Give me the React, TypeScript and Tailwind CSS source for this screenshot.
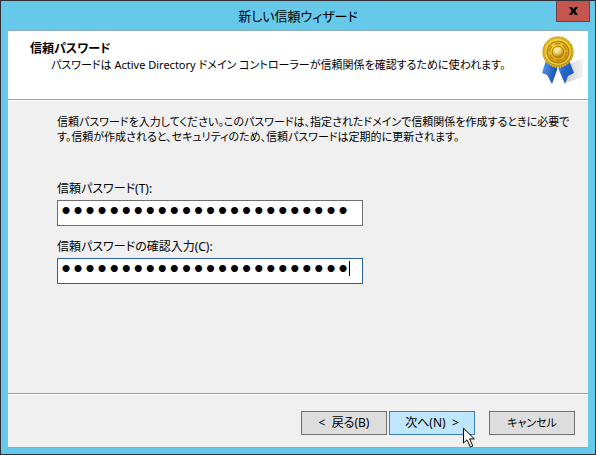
import React, { useState } from "react";

const uiButton =
  "h-6 w-[86px] border leading-4 text-black whitespace-pre text-center";

function MedalIcon() {
  const teeth = Array.from({ length: 36 }, (_, i) => i * 10);

  return (
    <svg width="44" height="52" viewBox="0 0 44 52" aria-hidden="true">
      <defs>
        <radialGradient id="gold" cx="0.4" cy="0.3" r="0.75">
          <stop offset="0" stopColor="#f5d642" />
          <stop offset="0.6" stopColor="#dcab18" />
          <stop offset="1" stopColor="#b07a08" />
        </radialGradient>
        <radialGradient id="boss" cx="0.4" cy="0.3" r="0.7">
          <stop offset="0" stopColor="#fffbd8" />
          <stop offset="0.5" stopColor="#edcb55" />
          <stop offset="1" stopColor="#a87308" />
        </radialGradient>
        <linearGradient id="ribbonLeft" x1="0" y1="0" x2="1" y2="0.3">
          <stop offset="0" stopColor="#5f9be4" />
          <stop offset="0.45" stopColor="#3a7cd6" />
          <stop offset="1" stopColor="#1a55ae" />
        </linearGradient>
        <linearGradient id="ribbonRight" x1="0" y1="0" x2="1" y2="0.4">
          <stop offset="0" stopColor="#6ba4ea" />
          <stop offset="0.4" stopColor="#2469cc" />
          <stop offset="1" stopColor="#1c5ab8" />
        </linearGradient>
        <linearGradient id="shade" x1="0" y1="0" x2="1" y2="0">
          <stop offset="0" stopColor="#cccccc" />
          <stop offset="1" stopColor="#f4f4f4" />
        </linearGradient>
      </defs>
      <path d="M25 49 L30 30 L43 24 V43 Z" fill="url(#shade)" />
      <path d="M6 26 L2 39 L7 41 L12 50 L17 36 L17 30 Z" fill="url(#ribbonLeft)" />
      <path d="M18 34 L25 50 L28 42 L34 39 L29 26 Z" fill="url(#ribbonRight)" />
      <circle cx="18" cy="18" r="15" fill="url(#gold)" stroke="#b8860c" />
      {teeth.map((angle) => (
        <path
          key={angle}
          d="M18 2.2 V4.4"
          stroke="#e0bb30"
          strokeWidth="1.4"
          transform={`rotate(${angle} 18 18)`}
        />
      ))}
      <circle cx="18" cy="18" r="12.2" fill="none" stroke="#f5da56" strokeWidth="1.2" />
      <circle cx="18" cy="18" r="10.8" fill="none" stroke="#b07d0c" strokeWidth="1.1" />
      <circle cx="18" cy="18" r="8.5" fill="none" stroke="#c08a0d" strokeWidth="1.4" strokeDasharray="6 3" />
      <circle cx="18" cy="18" r="5.8" fill="url(#boss)" stroke="#b27f0c" />
    </svg>
  );
}

function Pointer() {
  return (
    <svg
      width="13"
      height="21"
      viewBox="0 0 13 21"
      className="pointer-events-none absolute left-[74px] top-4 z-10"
      aria-hidden="true"
    >
      <path
        d="M0.5 1.2 V16 L4 12.8 L7.4 20 L9.8 19 L6.6 11.9 H11.3 Z"
        fill="#fff"
        stroke="#000"
      />
    </svg>
  );
}

type PasswordFieldProps = {
  id: string;
  label: string;
  focused?: boolean;
  value: string;
  onChange: (value: string) => void;
};

function PasswordField({ id, label, focused, value, onChange }: PasswordFieldProps) {
  return (
    <div>
      <label htmlFor={id} className="block text-xs leading-4">
        {label}
      </label>
      <div className="relative mt-[3px] w-full max-w-[306px]">
        <input
          id={id}
          type="password"
          value={value}
          onChange={(e) => onChange(e.target.value)}
          className={`block h-[26px] w-full border bg-white px-0.5 pb-1 font-['DejaVu_Sans_Mono',monospace] text-xl font-bold leading-5 text-black outline-0 ${
            focused ? "border-[#2a6496]" : "border-[#707070]"
          }`}
        />
        {focused && (
          <span className="pointer-events-none absolute left-[292px] top-[3px] h-[15px] w-px bg-black" />
        )}
      </div>
    </div>
  );
}

function App() {
  const [password, setPassword] = useState("x".repeat(24));
  const [confirm, setConfirm] = useState("x".repeat(24));

  return (
    <div className="flex min-h-screen flex-col border border-[#2f3036] bg-[#67c9ea] font-['Noto_Sans','Noto_Sans_CJK_JP',sans-serif] text-black [font-feature-settings:'palt']">
      <header className="grid h-[29px] grid-cols-[1fr_auto_1fr] items-start">
        <h1 className="col-start-2 pt-[3px] text-[13px] leading-6">新しい信頼ウィザード</h1>
        <button
          type="button"
          aria-label="閉じる"
          className="mr-[5px] flex h-[21px] w-[34px] items-center justify-center justify-self-end border border-t-0 border-[#70413f] bg-[#c4564f]"
        >
          <svg width="9" height="8" viewBox="0 0 9 8" aria-hidden="true">
            <path d="M0 0 H3 L4.5 2.4 L6 0 H9 L6.2 4 L9 8 H6 L4.5 5.6 L3 8 H0 L2.8 4 Z" fill="#000" />
          </svg>
        </button>
      </header>

      <main className="mx-[7px] mb-1.5 flex flex-1 flex-col border-y border-[#86aebd] bg-[#f0f0f0]">
        <section className="flex h-[69px] items-start justify-between border-b border-[#a0a0a0] bg-white pl-[22px] pr-1">
          <div className="pt-2.5">
            <h2 className="text-xs font-bold leading-4">信頼パスワード</h2>
            <p className="pl-[21px] text-[11px] leading-[15px]">
              パスワードは Active Directory ドメイン コントローラーが信頼関係を確認するために使われます。
            </p>
          </div>
          <div className="shrink-0 pt-[3px]">
            <MedalIcon />
          </div>
        </section>

        <form
          id="trust-form"
          onSubmit={(e) => e.preventDefault()}
          className="flex-1 border-t border-white pl-[49px] pr-2 pt-[13px]"
        >
          <p className="text-[11px] leading-[15px]">
            信頼パスワードを入力してください。このパスワードは、指定されたドメインで信頼関係を作成するときに必要で
            <br />
            す。信頼が作成されると、セキュリティのため、信頼パスワードは定期的に更新されます。
          </p>
          <div className="mt-[37px] space-y-[13px]">
            <PasswordField
              id="password"
              label="信頼パスワード(T):"
              value={password}
              onChange={setPassword}
            />
            <PasswordField
              id="confirm"
              label="信頼パスワードの確認入力(C):"
              focused
              value={confirm}
              onChange={setConfirm}
            />
          </div>
        </form>

        <footer className="flex justify-end border-t border-[#a0a0a0]">
          <div className="flex flex-1 justify-end border-t border-white pb-3 pr-[13px] pt-4">
            <button type="button" className={`${uiButton} mr-0.5 border-[#707070] bg-[#dddddd] text-xs`}>
              {"<  戻る(B)"}
            </button>
            <div className="relative mr-3.5">
              <button
                type="submit"
                form="trust-form"
                className={`${uiButton} block border-[#3c7fb1] bg-[#bee6fd] text-xs`}
              >
                {"次へ(N)  >"}
              </button>
              <Pointer />
            </div>
            <button type="button" className={`${uiButton} border-[#707070] bg-[#dddddd] text-[11px]`}>
              キャンセル
            </button>
          </div>
        </footer>
      </main>
    </div>
  );
}

export default App;
